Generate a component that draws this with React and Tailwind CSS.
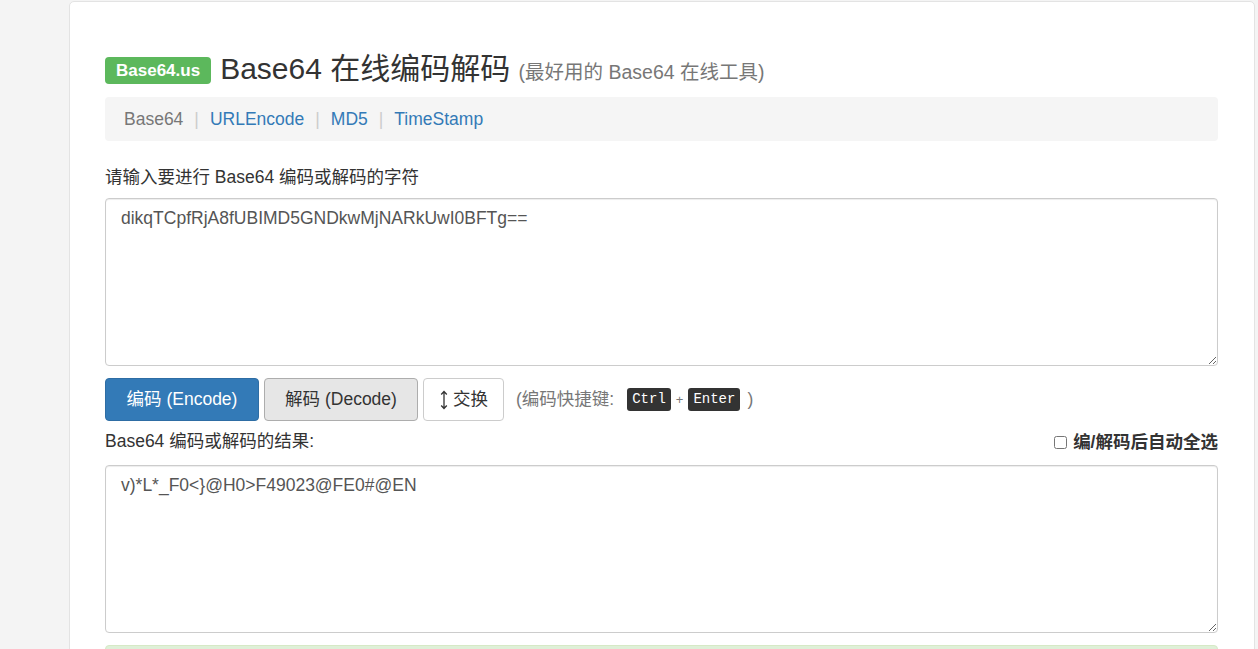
import React from 'react';

const font = { fontFamily: '"Liberation Sans", "Noto Sans CJK SC", Arial, sans-serif' };

const App = () => {
  return (
    <div className="min-h-screen bg-[#f4f4f4] text-[#333]" style={font}>
      <div className="ml-[69px] mr-[3px] pt-[1px]">
        <div className="bg-white border border-[#e3e3e3] rounded-[5px] pl-[35px] pr-[36px] pt-[50px] pb-4 min-h-[660px]">
          {/* Title */}
          <div className="flex items-center gap-[9px] h-[40px]">
            <span className="mb-[3px] inline-block bg-[#5cb85c] text-white font-bold text-[17px] leading-none px-[11px] py-[5px] rounded-[4px]">
              Base64.us
            </span>
            <h1 className="text-[30px] leading-[40px] text-[#333] -mt-[4px]">
              Base64 在线编码解码{' '}
              <small className="text-[19.5px] text-[#777]">(最好用的 Base64 在线工具)</small>
            </h1>
          </div>

          {/* Nav */}
          <div className="mt-[5px] bg-[#f5f5f5] rounded-[4px] h-[44px] flex items-center px-[19px] text-[17.5px]">
            <span className="text-[#777]">Base64</span>
            <span className="text-[#ccc] px-[11px]">|</span>
            <a className="text-[#337ab7]">URLEncode</a>
            <span className="text-[#ccc] px-[11px]">|</span>
            <a className="text-[#337ab7]">MD5</a>
            <span className="text-[#ccc] px-[11px]">|</span>
            <a className="text-[#337ab7]">TimeStamp</a>
          </div>

          {/* Input */}
          <label className="block mt-[24px] text-[17.5px] leading-[24px] text-[#333]">
            请输入要进行 Base64 编码或解码的字符
          </label>
          <textarea
            readOnly
            value="dikqTCpfRjA8fUBIMD5GNDkwMjNARkUwI0BFTg=="
            className="mt-[9px] block w-full h-[168px] border border-[#ccc] rounded-[4px] px-[15px] py-[7px] text-[17.5px] leading-[25px] text-[#555] outline-none shadow-[inset_0_1px_1px_rgba(0,0,0,0.075)]"
            style={font}
          />

          {/* Buttons */}
          <div className="mt-[12px] flex items-center gap-[5px]">
            <button className="h-[43px] w-[154px] bg-[#337ab7] border border-[#2e6da4] text-white rounded-[4px] text-[17.5px]">
              编码 (Encode)
            </button>
            <button className="h-[43px] w-[154px] bg-[#e6e6e6] border border-[#adadad] text-[#333] rounded-[4px] text-[17.5px]">
              解码 (Decode)
            </button>
            <button className="h-[43px] w-[81px] bg-white border border-[#ccc] text-[#333] rounded-[4px] text-[17.5px] flex items-center justify-center gap-[4px]">
              <svg width="10" height="22" viewBox="0 0 10 22" fill="none" stroke="#333" strokeWidth="1.3">
                <path d="M5 2.5v17M2.2 5.5L5 2.5l2.8 3M2.2 16.5L5 19.5l2.8-3" />
              </svg>
              交换
            </button>
            <span className="ml-[7px] text-[17.5px] text-[#777] flex items-center">
              (编码快捷键:
              <kbd className="ml-[13px] bg-[#333] text-white rounded-[3px] px-[5px] py-[3px] text-[14px] leading-[17px] font-['Liberation_Mono',monospace]">Ctrl</kbd>
              <span className="mx-[5px] text-[13px]">+</span>
              <kbd className="bg-[#333] text-white rounded-[3px] px-[5px] py-[3px] text-[14px] leading-[17px] font-['Liberation_Mono',monospace]">Enter</kbd>
              <span className="ml-[7px]">)</span>
            </span>
          </div>

          {/* Result */}
          <div className="mt-[6px] flex items-center justify-between">
            <label className="text-[17.5px] leading-[24px] text-[#333]">Base64 编码或解码的结果:</label>
            <label className="flex items-center gap-[6px] font-bold text-[17.5px] text-[#333] mt-[2px]">
              <input type="checkbox" className="w-[13px] h-[13px]" />
              编/解码后自动全选
            </label>
          </div>
          <textarea
            readOnly
            value="v)*L*_F0<}@H0>F49023@FE0#@EN"
            className="mt-[10px] block w-full h-[168px] border border-[#ccc] rounded-[4px] px-[15px] py-[7px] text-[17.5px] leading-[25px] text-[#555] outline-none shadow-[inset_0_1px_1px_rgba(0,0,0,0.075)]"
            style={font}
          />

          <div className="mt-[12px] h-[50px] bg-[#dff0d8] border border-[#d6e9c6] rounded-[4px]" />
        </div>
      </div>
    </div>
  );
};

export default App;
